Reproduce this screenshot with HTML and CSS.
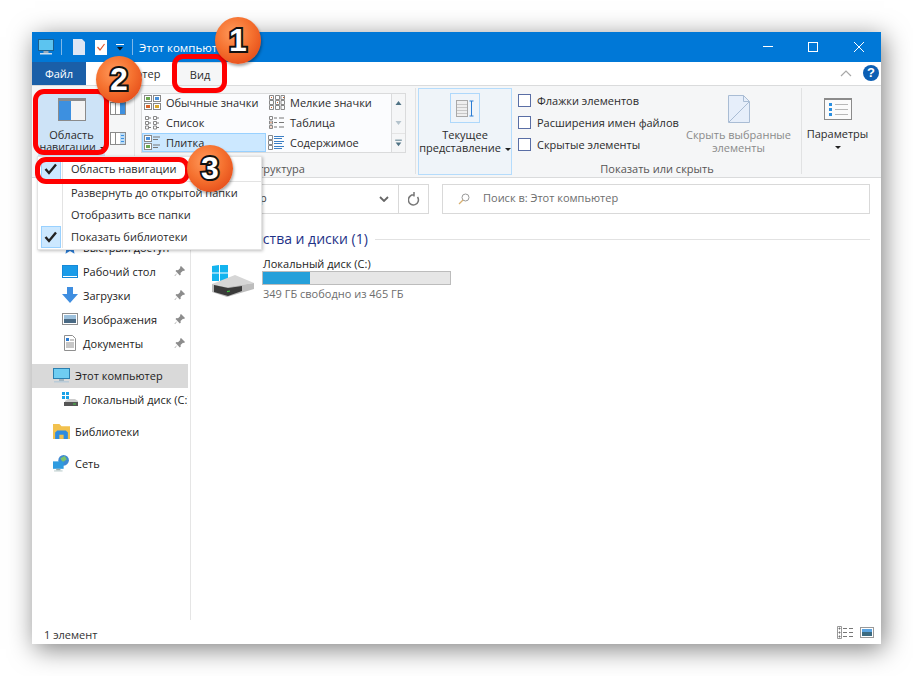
FILE: index.html
```html
<!DOCTYPE html>
<html lang="ru">
<head>
<meta charset="utf-8">
<title>Этот компьютер</title>
<link rel="stylesheet" href="styles.css">
</head>
<body>
<div class="window">
  <header class="titlebar">
    <svg class="t-pc" width="16" height="16" viewBox="0 0 16 16"><rect x=".5" y=".5" width="15" height="11" fill="#5cc4f0" stroke="#1c5f8c"/><rect x="5.500" y="12" width="5" height="2" fill="#9ab"/><rect x="2" y="14" width="12" height="1.500" fill="#cde"/></svg>
    <span class="t-sep"></span>
    <svg class="t-doc" width="12" height="16" viewBox="0 0 12 16"><path d="M0 0h9l3 3v13H0z" fill="#dde6f4"/></svg>
    <svg class="t-check" width="12" height="16" viewBox="0 0 12 16"><path d="M0 1h12v15H0z" fill="#fff"/><path d="M2.500 8l2.500 3 4.500-6" fill="none" stroke="#e0562a" stroke-width="1.200"/></svg>
    <svg class="t-drop" width="8" height="8" viewBox="0 0 8 8"><path d="M0 1h8v1H0z" fill="#fff"/><path d="M1 4h6L4 7.500z" fill="#111"/></svg>
    <span class="t-sep"></span>
    <span class="t-title">Этот компьютер</span>
    <div class="winbtns">
      <svg width="46" height="30" viewBox="0 0 46 30"><path d="M20 14.500h10" stroke="#fff"/></svg>
      <svg width="46" height="30" viewBox="0 0 46 30"><rect x="19.500" y="10.500" width="9" height="9" fill="none" stroke="#fff"/></svg>
      <svg width="46" height="30" viewBox="0 0 46 30"><path d="M19 10l10 10M29 10L19 20" stroke="#fff"/></svg>
    </div>
  </header>

  <nav class="tabs">
    <span class="tab tab-file">Файл</span>
    <span class="tab tab-pc">Компьютер</span>
    <span class="tab tab-view">Вид</span>
    <span class="tabs-fill"></span>
    <svg class="chev" width="12" height="8" viewBox="0 0 12 8"><path d="M1 7l5-5 5 5" fill="none" stroke="#a8a8a8" stroke-width="1.200"/></svg>
    <span class="help">?</span>
  </nav>

  <section class="ribbon">
    <div class="g g-panels">
      <div class="navbtn">
        <svg width="28" height="23" viewBox="0 0 28 23"><rect width="28" height="23" fill="#8b8b8b"/><rect x="1" y="3" width="12" height="19" fill="#3d90e0"/><rect x="13" y="3" width="14" height="19" fill="#f4f4f4"/></svg>
        <span class="lbl">Область</span>
        <span class="lbl">навигации <i class="caret"></i></span>
      </div>
      <div class="navside">
        <svg width="16" height="13" viewBox="0 0 16 13"><rect x=".5" y=".5" width="15" height="12" fill="#fff" stroke="#8b8b8b"/><rect x="10" y="1" width="5" height="11" fill="#3d90e0"/><path d="M5.500 1v11" stroke="#8b8b8b"/></svg>
        <svg width="16" height="13" viewBox="0 0 16 13"><rect x=".5" y=".5" width="15" height="12" fill="#fff" stroke="#8b8b8b"/><rect x="10" y="1" width="5" height="11" fill="#bcdcf6"/><path d="M11 3.500h3M11 6.500h3M11 9.500h3" stroke="#3d90e0"/><path d="M5.500 1v11" stroke="#8b8b8b"/></svg>
      </div>
    </div>
    <span class="rsep"></span>
    <div class="g g-layout">
      <div class="gallery">
        <div class="gal-items">
          <span class="gi"><svg width="17" height="15" viewBox="0 0 17 15"><g stroke="#888" fill="#fff"><rect x=".5" y=".5" width="7" height="6"/><rect x="9.500" y=".5" width="7" height="6"/><rect x=".5" y="8.500" width="7" height="6"/><rect x="9.500" y="8.500" width="7" height="6"/></g><path d="M2 2h4v3H2z" fill="#6aa84f"/><path d="M11 2h4v3h-4z" fill="#4a90d9"/><path d="M2 10h4v3H2z" fill="#d9642a"/><path d="M11 10h4v3h-4z" fill="#d9a62a"/></svg>Обычные значки</span>
          <span class="gi"><svg width="17" height="15" viewBox="0 0 17 15"><g fill="none" stroke="#888"><path d="M1.500.5h4v4h-4zM7.500.5h4v4h-4zM13 .5h3.500v4H13zM1.500 5.500h4v4h-4zM7.500 5.500h4v4h-4zM13 5.500h3.500v4H13zM1.500 10.500h4v4h-4zM7.500 10.500h4v4h-4zM13 10.500h3.500v4H13z"/></g><path d="M3 2h1v1H3zM15 2h1v1h-1zM9 7h1v1H9zM3 12h1v1H3z" fill="#d9642a"/></svg>Мелкие значки</span>
          <span class="gi"><svg width="17" height="15" viewBox="0 0 17 15"><g fill="none" stroke="#888"><path d="M1.500 1.500h3v3h-3zM1.500 6.500h3v3h-3zM1.500 11h3v3h-3zM9.500 1.500h3v3h-3zM9.500 6.500h3v3h-3zM9.500 11h3v3h-3z"/></g><path d="M5 3h2M5 8h2M5 12.500h2M13 3h2M13 8h2M13 12.500h2" stroke="#777"/></svg>Список</span>
          <span class="gi"><svg width="17" height="15" viewBox="0 0 17 15"><path d="M1.500 1.500h3v3h-3zM1.500 6h3v3h-3zM1.500 10.500h3v3h-3z" fill="none" stroke="#888"/><path d="M6 3h3M11 3h5M6 7.500h3M11 7.500h5M6 12h3M11 12h5" stroke="#777"/><path d="M2.500 7h1v1h-1zM2.500 11.500h1v1h-1z" fill="#d9642a"/></svg>Таблица</span>
          <span class="gi gi-sel"><svg width="17" height="15" viewBox="0 0 17 15"><g stroke="#888" fill="#fff"><rect x=".5" y=".5" width="7" height="6"/><rect x=".5" y="8.500" width="7" height="6"/></g><path d="M2 2h4v3H2z" fill="#4a90d9"/><path d="M2 10h4v3H2z" fill="#6aa84f"/><path d="M9 2h7M9 4.500h5M9 10h7M9 12.500h5" stroke="#777"/></svg>Плитка</span>
          <span class="gi"><svg width="17" height="15" viewBox="0 0 17 15"><path d="M.5.500h4v4h-4zM.5 5.500h4v4h-4zM.5 10.500h4v4h-4z" fill="none" stroke="#888"/><path d="M6 1.500h10M6 3.500h8M6 6.500h10M6 8.500h8M6 11.500h10M6 13.500h8" stroke="#3d7fc4"/></svg>Содержимое</span>
        </div>
        <div class="gal-scroll">
          <svg width="13" height="19" viewBox="0 0 13 19"><path d="M3.500 11h6l-3-4z" fill="#4f7284"/></svg>
          <svg width="13" height="20" viewBox="0 0 13 20"><path d="M3.500 8h6l-3 4z" fill="#b4c3cc"/></svg>
          <svg width="13" height="19" class="gs-last" viewBox="0 0 13 19"><path d="M3 6h7v1H3z" fill="#4f7284"/><path d="M3.500 9h6l-3 4z" fill="#4f7284"/></svg>
        </div>
      </div>
      <span class="glabel">Структура</span>
    </div>
    <span class="rsep"></span>
    <div class="g g-current">
      <span class="curicon"><svg width="18" height="17" viewBox="0 0 18 17"><rect x=".5" y=".5" width="11" height="16" fill="#eee" stroke="#a8a8a8"/><path d="M1 4.500h10M1 7.500h10M1 10.500h10M1 13.500h10" stroke="#c8c8c8"/><path d="M15.500 1v15M13.500 1h4M13.500 16h4" stroke="#2b7cd3"/></svg></span>
      <span class="lbl">Текущее</span>
      <span class="lbl">представление <i class="caret"></i></span>
    </div>
    <span class="rsep0"></span>
    <div class="g g-show">
      <div class="show-row">
        <div class="checks">
          <label class="chk"><span class="box"></span>Флажки элементов</label>
          <label class="chk"><span class="box"></span>Расширения имен файлов</label>
          <label class="chk"><span class="box"></span>Скрытые элементы</label>
        </div>
        <div class="hidebtn">
          <svg width="22" height="28" viewBox="0 0 22 28"><path d="M.5 27.500V.5h15l6 6v21z" fill="#e6eefa"/><path d="M.5 27.500V.5h15M21.500 6.500v21h-21" fill="none" stroke="#a9bcd4"/><path d="M15.500.5v6h6zM1 27L21 7" fill="none" stroke="#a9bcd4"/></svg>
          <span class="lbl lbl-grey">Скрыть выбранные</span>
          <span class="lbl lbl-grey">элементы</span>
        </div>
      </div>
      <span class="glabel">Показать или скрыть</span>
    </div>
    <span class="rsep"></span>
    <div class="g g-options">
      <svg width="28" height="22" viewBox="0 0 28 22"><rect x=".5" y=".5" width="27" height="21" fill="#fbfbfb" stroke="#8b8b8b"/><path d="M0 0h28v2H0z" fill="#8b8b8b"/><path d="M5 5h3v3H5zM5 10h3v3H5zM5 15h3v3H5z" fill="#2b8fe0"/><path d="M11 6.500h13M11 11.500h13M11 16.500h13" stroke="#b8b8b8"/></svg>
      <span class="lbl">Параметры</span>
      <i class="caret caret-solo"></i>
    </div>
  </section>

  <div class="addressbar">
    <div class="addr">
      <span class="addr-text">Этот компьютер</span>
      <svg class="addr-chev" width="10" height="6" viewBox="0 0 10 6"><path d="M1 1l4 4 4-4" fill="none" stroke="#666" stroke-width="1.800"/></svg>
      <span class="addr-ref"><svg width="12" height="14" viewBox="0 0 12 14"><path d="M9.500 5a5 5 0 1 1-3-2M6 0v4.500" fill="none" stroke="#777" stroke-width="1.500"/></svg></span>
    </div>
    <div class="search">
      <svg width="12" height="12" viewBox="0 0 12 12"><circle cx="7.500" cy="4.500" r="3.500" fill="none" stroke="#999"/><path d="M5 7l-4 4" stroke="#d8b070" stroke-width="1.200"/></svg>
      <span class="search-text">Поиск в: Этот компьютер</span>
    </div>
  </div>

  <div class="body">
    <aside class="sidebar">
      <div class="nav nav-in">
        <svg width="16" height="16" viewBox="0 0 16 16"><path d="M8 1l2.200 4.600 5 .7-3.600 3.500.9 5L8 12l-4.500 2.800.9-5L.8 6.300l5-.7z" fill="#2b7cd3"/></svg>
        <span class="nt">Быстрый доступ</span>
      </div>
      <div class="nav nav-in">
        <svg width="16" height="13" viewBox="0 0 16 13"><rect width="16" height="13" fill="#1689d8"/><rect x="1" y="1" width="14" height="10" fill="#1a9be8"/><path d="M1 11h14v1H1z" fill="#fff"/></svg>
        <span class="nt">Рабочий стол</span>
        <svg class="pin" width="11" height="11" viewBox="0 0 11 11"><path d="M7 0l4 4-1 1-1-.3L6.500 7l.3 1.500-1 1L3.500 7 1 10l-.5-.5L3.500 7 1.500 5l1-1 1.500.3L6.300 2 6 1z" fill="#8c8c8c"/></svg>
      </div>
      <div class="nav nav-in">
        <svg width="16" height="16" viewBox="0 0 16 16"><path d="M5 0h6v7h5l-8 9-8-9h5z" fill="#3f8ee0"/></svg>
        <span class="nt">Загрузки</span>
        <svg class="pin" width="11" height="11" viewBox="0 0 11 11"><path d="M7 0l4 4-1 1-1-.3L6.500 7l.3 1.500-1 1L3.500 7 1 10l-.5-.5L3.500 7 1.500 5l1-1 1.500.3L6.300 2 6 1z" fill="#8c8c8c"/></svg>
      </div>
      <div class="nav nav-in">
        <svg width="16" height="12" viewBox="0 0 16 12"><rect x=".5" y=".5" width="15" height="11" fill="#fff" stroke="#8f8f8f"/><rect x="2" y="2" width="12" height="4" fill="#9cc0dc"/><rect x="2" y="6" width="12" height="4" fill="#4a6a84"/></svg>
        <span class="nt">Изображения</span>
        <svg class="pin" width="11" height="11" viewBox="0 0 11 11"><path d="M7 0l4 4-1 1-1-.3L6.500 7l.3 1.500-1 1L3.500 7 1 10l-.5-.5L3.500 7 1.500 5l1-1 1.500.3L6.300 2 6 1z" fill="#8c8c8c"/></svg>
      </div>
      <div class="nav nav-in">
        <svg width="16" height="16" viewBox="0 0 16 16"><path d="M2.500.5h8l3 3v12h-11z" fill="#fff" stroke="#8f8f8f"/><path d="M4 3h3v3H4z" fill="#2b7cd3"/><path d="M4 8h8M4 10h8M4 12h8M8 5h4" stroke="#8f8f8f"/></svg>
        <span class="nt">Документы</span>
        <svg class="pin" width="11" height="11" viewBox="0 0 11 11"><path d="M7 0l4 4-1 1-1-.3L6.500 7l.3 1.500-1 1L3.500 7 1 10l-.5-.5L3.500 7 1.500 5l1-1 1.500.3L6.300 2 6 1z" fill="#8c8c8c"/></svg>
      </div>
      <div class="nav nav-top nav-sel">
        <svg width="17" height="15" viewBox="0 0 17 15"><rect x=".5" y=".5" width="16" height="10" fill="#6fcdf2" stroke="#2a7fb0"/><rect x="6" y="11" width="5" height="2" fill="#a0b4c0"/><rect x="1" y="13" width="15" height="1.500" fill="#b9cbd8"/></svg>
        <span class="nt">Этот компьютер</span>
      </div>
      <div class="nav nav-in">
        <svg width="16" height="15" viewBox="0 0 16 15"><path d="M0 0h3v3H0zM4 0h3v3H4zM0 4h3v3H0zM4 4h3v3H4z" fill="#19a2e8"/><path d="M3 9l3-2h7l3 2v2H3z" fill="#ccc"/><path d="M2 10h14v4H2z" fill="#555"/><path d="M11 11.500h3v1h-3z" fill="#4c4"/></svg>
        <span class="nt nt-clip">Локальный диск (C:)</span>
      </div>
      <div class="nav nav-top">
        <svg width="17" height="16" viewBox="0 0 16 15"><path d="M0 1h6l2 2h8v12H0z" fill="#f2c14e"/><path d="M4 7h8l2 2v6H2V9z" fill="#2f8ce0"/><path d="M6 11h4v4H6z" fill="#f2c14e"/></svg>
        <span class="nt">Библиотеки</span>
      </div>
      <div class="nav nav-top">
        <svg width="17" height="17" viewBox="0 0 16 16"><circle cx="10" cy="5" r="5" fill="#3f8ad2"/><path d="M7 3l4-2 2 3-4 3z" fill="#7cc36a"/><rect x="0" y="6" width="10" height="7" fill="#2f9be0"/><path d="M3 13h4v1.500H3z" fill="#9aa"/><path d="M1 14.500h8v1H1z" fill="#bcc"/></svg>
        <span class="nt">Сеть</span>
      </div>
    </aside>
    <main class="content">
      <div class="grouphead"><span>Устройства и диски (1)</span><i></i></div>
      <div class="drive">
        <svg width="46" height="34" viewBox="0 0 46 34"><path d="M0 1l7-1v7.500H0zM8 0l8-1v8.500H8zM0 8.500h7V16H0zM8 8.500h8V17l-8-1z" fill="#14b4ef"/><path d="M0 19l23-9 19 8-27 4z" fill="#d6d6d6"/><path d="M0 19l15 3 27-4v6l-27 8-15-5z" fill="#bdbdbd"/><path d="M2 20l14 3 14-2v5l-14 5-14-4z" fill="#3a3a3a"/><path d="M15 26l3-.6v1.200l-3 .6z" fill="#3fd03f"/></svg>
        <div class="drive-info">
          <span class="drive-name">Локальный диск (C:)</span>
          <span class="bar"><b></b></span>
          <span class="drive-free">349 ГБ свободно из 465 ГБ</span>
        </div>
      </div>
    </main>
  </div>

  <footer class="status">
    <span class="status-text">1 элемент</span>
    <span class="status-icons">
      <svg width="16" height="13" viewBox="0 0 16 13"><path d="M.5.500h4v12h-4z" fill="none" stroke="#999"/><path d="M2 2h1v1H2zM2 6h1v1H2zM2 10h1v1H2zM6 2.500h4M12 2.500h4M6 6.500h4M12 6.500h4M6 10.500h4M12 10.500h4" stroke="#777"/></svg>
      <svg width="14" height="11" viewBox="0 0 14 11"><rect x=".5" y=".5" width="13" height="10" fill="#fff" stroke="#999"/><rect x="2" y="2" width="10" height="3" fill="#5aa3e0"/><rect x="2" y="5" width="10" height="4" fill="#3b6a80"/></svg>
    </span>
  </footer>

  <div class="menu">
    <div class="mi"><span class="mk mk-on"><svg width="14" height="12" viewBox="0 0 14 12"><path d="M1.500 6l3.500 4 7-8.500" fill="none" stroke="#222" stroke-width="2.400"/></svg></span><span class="mt">Область навигации</span></div>
    <div class="mi mdiv"><span class="mk"></span><span class="mt"><i class="mline"></i></span></div>
    <div class="mi"><span class="mk"></span><span class="mt">Развернуть до открытой папки</span></div>
    <div class="mi"><span class="mk"></span><span class="mt">Отобразить все папки</span></div>
    <div class="mi"><span class="mk mk-on"><svg width="14" height="12" viewBox="0 0 14 12"><path d="M1.500 6l3.500 4 7-8.500" fill="none" stroke="#222" stroke-width="2.400"/></svg></span><span class="mt">Показать библиотеки</span></div>
  </div>

  <span class="mark mark-1"></span>
  <span class="mark mark-2"></span>
  <span class="mark mark-3"></span>
  <span class="num num-1">1</span>
  <span class="num num-2">2</span>
  <span class="num num-3">3</span>
</div>
</body>
</html>
```

FILE: styles.css
```css
* { box-sizing: border-box; }
html, body { margin: 0; height: 100%; background: #fff; overflow: hidden; }
body { padding: 32px 0 0 32px; font: 11px/15px "Open Sans", "Noto Sans", sans-serif; color: #2b2b2b; }
i { font-style: normal; }
svg { display: block; flex: none; }

.window { position: relative; width: 849px; height: 612px; background: #fff; display: flex; flex-direction: column; box-shadow: 3px 5px 24px rgba(0,0,0,.5); }

.titlebar { height: 30px; background: #0078d7; color: #fff; display: flex; align-items: center; flex: none; padding-left: 6px; }
.t-sep { width: 1px; height: 16px; background: #7fb8e8; margin: 0 11px 0 7px; }
.t-doc { margin-right: 10px; }
.t-check { margin-right: 9px; }
.t-drop + .t-sep { margin: 0 6px 0 8px; }
.t-title { font-size: 11.5px; }
.winbtns { margin-left: auto; display: flex; }

.tabs { height: 24px; flex: none; display: flex; align-items: stretch; background: #fff; border-bottom: 1px solid #dadbdc; }
.tab { display: flex; align-items: center; justify-content: center; }
.tab-file { width: 54px; background: #1a5fa8; color: #fff; }
.tab-pc { width: 87px; }
.tab-view { width: 49px; background: #f5f6f7; border: 1px solid #dadbdc; border-bottom: 0; margin-left: 2px; padding-left: 1px; }
.tabs-fill { flex: 1; }
.chev { align-self: center; margin: 0 11px 2px 0; }
.help { align-self: center; width: 16px; height: 16px; margin: 0 2px 1px 0; border-radius: 50%; background: #0c5fb4; color: #fff; font: bold 13px/16px "Liberation Sans", sans-serif; text-align: center; }

.ribbon { height: 92px; flex: none; display: flex; background: #f5f6f7; border-bottom: 1px solid #dadbdc; padding-top: 2px; }
.g { display: flex; flex-direction: column; flex: none; }
.lbl { display: block; text-align: center; line-height: 13px; white-space: nowrap; }
.lbl-grey { color: #8a8a8a; }
.caret { display: inline-block; width: 0; height: 0; border: 3px solid transparent; border-top: 3px solid #222; border-bottom: 0; vertical-align: middle; margin-left: 1px; }
.rsep { width: 1px; height: 86px; background: #e1e2e3; flex: none; }
.rsep0 { width: 1px; flex: none; }

.g-panels { width: 102px; flex-direction: row; padding-left: 6px; }
.navbtn { width: 67px; height: 64px; margin-top: 4px; background: #cde3f7; display: flex; flex-direction: column; align-items: center; padding-top: 6px; }
.navbtn svg { margin-bottom: 7px; }
.navbtn .lbl:last-child { padding-left: 2px; font-size: 10.7px; }
.navside { margin-left: 5px; display: flex; flex-direction: column; gap: 17px; padding-top: 14px; }

.g-layout { width: 280px; padding: 5px 0 0 6px; }
.gallery { width: 265px; height: 60px; display: flex; background: #fbfcfe; border: 1px solid #dadbdc; }
.gal-items { flex: 1; display: grid; grid-template-columns: 124px 1fr; grid-template-rows: 20px 20px 19px; margin-top: -1px; }
.gi { display: flex; align-items: center; gap: 5px; padding: 0 0 1px 2px; white-space: nowrap; font-size: 11px; }
.gi-sel { background: #cce8ff; border: 1px solid #99d1ff; padding-left: 1px; width: 124px; }
.gal-scroll { width: 14px; flex: none; border-left: 1px solid #dadbdc; background: #f5f6f7; }
.gs-last { border-top: 1px solid #e4e4e4; }
.glabel { display: block; text-align: center; line-height: 15px; color: #555; margin-top: 8px; }

.g-current { width: 94px; height: 87px; margin-left: 2px; background: #eff4f9; border: 1px solid #b5dcfc; align-items: center; padding-top: 4px; }
.curicon { width: 30px; height: 30px; border: 1px solid #aed8fb; display: flex; align-items: center; justify-content: center; margin-bottom: 5px; }

.g-show { width: 288px; }
.show-row { display: flex; height: 73px; }
.checks { width: 175px; padding: 5px 0 0 5px; display: flex; flex-direction: column; gap: 7px; }
.chk { display: flex; align-items: center; gap: 6px; height: 15px; white-space: nowrap; }
.box { width: 13px; height: 13px; background: #fff; border: 1px solid #5a6ea5; flex: none; }
.hidebtn { flex: 1; display: flex; flex-direction: column; align-items: center; padding-top: 7px; margin-left: -12px; }
.hidebtn svg { margin-bottom: 5px; }
.g-show .glabel { margin-top: 0; }

.g-options { width: 76px; align-items: center; padding: 10px 5px 0 0; }
.g-options svg { margin-bottom: 7px; }
.caret-solo { margin: 6px 0 0; }

.addressbar { height: 42px; flex: none; display: flex; padding: 6px 11px 6px 5px; gap: 13px; }
.addr { width: 392px; display: flex; align-items: center; border: 1px solid #d9d9d9; color: #444; padding-left: 141px; }
.addr-text { flex: 1; white-space: nowrap; overflow: hidden; padding-bottom: 3px; }
.addr-chev { margin-right: 9px; }
.addr-ref { width: 30px; height: 100%; border-left: 1px solid #d9d9d9; display: flex; align-items: center; justify-content: center; }
.search { flex: 1; display: flex; align-items: center; gap: 13px; padding-left: 15px; border: 1px solid #d9d9d9; color: #6d6d6d; }
.search-text { padding-bottom: 3px; }

.body { flex: 1; display: flex; min-height: 0; }
.sidebar { width: 159px; border-right: 1px solid #e5e5e5; padding-top: 16px; overflow: hidden; flex: none; }
.nav { height: 24px; display: flex; align-items: center; white-space: nowrap; padding-bottom: 2px; }
.nav-in { padding-left: 30px; }
.nav-in .nt { margin-left: 5px; }
.nav-top { padding-left: 21px; margin-top: 8px; width: 156px; }
.nav-top .nt { margin-left: 5px; }
.nav-sel { background: #d9d9d9; }
.nav .nt { color: #1c1c1c; }
.pin { margin-left: auto; margin-right: 5px; }
.nt-clip { overflow: hidden; max-width: 105px; }

.content { flex: 1; padding: 11px 11px 0 0; min-width: 0; }
.grouphead { display: flex; align-items: center; padding-left: 24px; gap: 7px; font-size: 14px; line-height: 16px; color: #1e3287; }
.grouphead i { flex: 1; height: 1px; background: #e2e2e2; }
.drive { display: flex; margin-top: 9px; padding-left: 21px; }
.drive svg { margin-top: 9px; }
.drive-info { margin-left: 4px; display: flex; flex-direction: column; }
.drive-name { color: #1c1c1c; line-height: 15px; padding-left: 1px; }
.bar { width: 189px; height: 14px; background: #e6e6e6; border: 1px solid #bcbcbc; display: block; }
.bar b { display: block; width: 47px; height: 100%; background: #26a0da; }
.drive-free { color: #6d6d6d; line-height: 15px; margin-top: 1px; padding-left: 1px; }

.status { height: 24px; flex: none; display: flex; align-items: center; justify-content: space-between; padding: 0 7px 0 12px; color: #333; }
.status-text { padding-top: 5px; }
.status-icons { display: flex; gap: 7px; align-items: center; }

.menu { position: absolute; left: 5px; top: 124px; width: 225px; height: 94px; background: #fff; border: 1px solid #e3e3e3; box-shadow: 1px 1px 3px rgba(0,0,0,.25); display: flex; flex-direction: column; padding-top: 1px; }
.mi { display: flex; height: 22px; align-items: stretch; flex: none; }
.mdiv { height: 2px; }
.mk { width: 20px; flex: none; margin: 0 1px 0 3px; display: flex; align-items: center; justify-content: center; }
.mk-on { background: #cce8ff; border: 1px solid #99d1ff; }
.mt { flex: 1; display: flex; align-items: center; padding: 0 0 1px 8px; border-left: 1px solid #e3e3e3; color: #2b2b2b; white-space: nowrap; }
.mdiv .mt { padding: 0; }
.mline { flex: 1; height: 1px; background: #e3e3e3; }

.mark { position: absolute; border: 5px solid #ff0000; border-radius: 11px; }
.mark-1 { left: 140px; top: 22px; width: 55px; height: 39px; }
.mark-2 { left: 1px; top: 57px; width: 76px; height: 66px; }
.mark-3 { left: 3px; top: 125px; width: 155px; height: 27px; }

.num { position: absolute; width: 46px; height: 47px; border-radius: 50%; background: radial-gradient(circle at 40% 35%, #ff9a5c 0, #f5712f 45%, #e44a18 85%, #cf3a0c 100%); box-shadow: 1px 2px 3px rgba(0,0,0,.35); text-align: center; font: bold 32px/47px "Liberation Sans", sans-serif; color: #fff; -webkit-text-stroke: 4px #111; paint-order: stroke fill; }
.num-1 { left: 183px; top: -15px; }
.num-2 { left: 64px; top: 24px; }
.num-3 { left: 155px; top: 113px; }
```
